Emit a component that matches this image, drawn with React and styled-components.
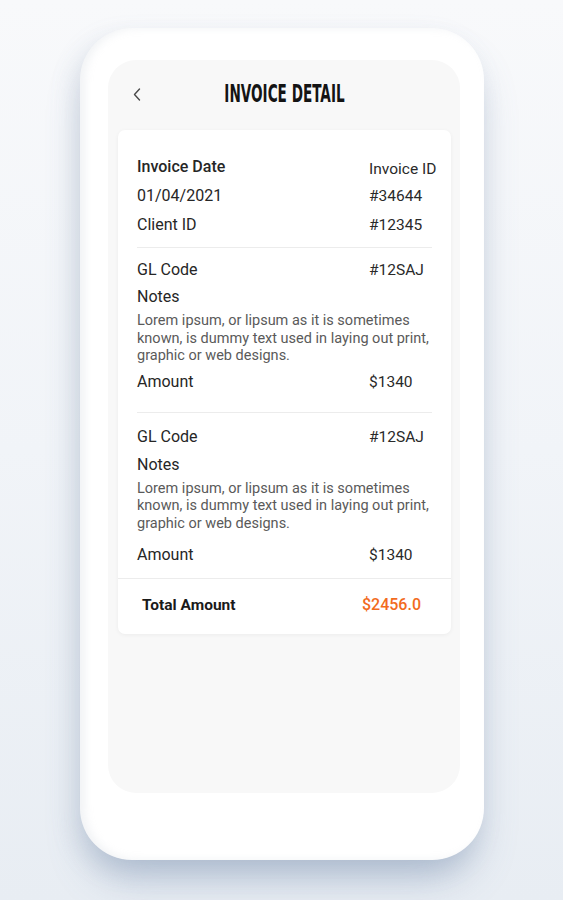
import React from "react";
import styled, { createGlobalStyle } from "styled-components";

const Global = createGlobalStyle`
  html, body { margin: 0; padding: 0; }
  body { font-family: Roboto, "Liberation Sans", sans-serif; }
  * { box-sizing: border-box; }
`;

const Page = styled.div`
  width: 563px;
  height: 900px;
  overflow: hidden;
  background: linear-gradient(180deg, #f8f9fb 0%, #f1f4f8 50%, #e8edf3 100%);
  display: flex;
  justify-content: center;
  padding-top: 28px;
`;

const Phone = styled.div`
  width: 404px;
  height: 832px;
  margin-left: 1px;
  background: #ffffff;
  border-radius: 52px;
  padding: 32px 24px 67px 28px;
  display: flex;
  box-shadow:
    0 26px 40px -10px rgba(110, 135, 170, 0.45),
    -6px 10px 24px rgba(140, 155, 175, 0.18),
    inset 5px 0 8px rgba(180, 190, 200, 0.18);
`;

const Screen = styled.div`
  flex: 1;
  background: #f8f8f8;
  border-radius: 28px;
  display: flex;
  flex-direction: column;
  padding: 0 9px 0 10px;
`;

const Header = styled.div`
  height: 70px;
  display: grid;
  grid-template-columns: 40px 1fr 40px;
  align-items: center;
  padding-bottom: 2px;
`;

const Back = styled.button`
  border: 0;
  background: none;
  padding: 0 0 0 15px;
  display: flex;
  align-items: center;
  color: #444;
  cursor: pointer;
`;

const TitleWrap = styled.div`
  display: flex;
  justify-content: center;
`;

const Title = styled.h1`
  margin: 0;
  display: inline-block;
  font-family: "Liberation Sans Narrow", "DejaVu Sans Condensed", "Liberation Sans", sans-serif;
  font-weight: 700;
  font-size: 24px;
  line-height: 24px;
  color: #141414;
  letter-spacing: 0;
  transform: scaleX(0.63);
  white-space: nowrap;
`;

const Card = styled.div`
  background: #ffffff;
  border-radius: 7px;
  box-shadow: 0 1px 4px rgba(0, 0, 0, 0.05);
  padding-top: 15px;
`;

const Body = styled.div`
  padding: 0 19px;
`;

const Section = styled.div`
  padding: ${(p) => p.$pt || 12}px 0 ${(p) => p.$pb || 12}px;
  border-bottom: ${(p) => (p.$noBorder ? "0" : "1px solid #ececec")};
  display: flex;
  flex-direction: column;
`;

const Row = styled.div`
  display: grid;
  grid-template-columns: 1fr 63px;
  align-items: center;
  line-height: 20px;
  margin-top: ${(p) => p.$mt || 0}px;
`;

const Label = styled.span`
  font-size: 16px;
  font-weight: ${(p) => (p.$strong ? 500 : 400)};
  color: #262626;
`;

const Value = styled.span`
  font-size: 15.5px;
  color: #2a2a2a;
  white-space: nowrap;
  transform: translateY(${(p) => p.$dy || 0}px);
`;

const Notes = styled.p`
  margin: 5px 0 0;
  font-size: 14.5px;
  line-height: 17.5px;
  color: #5a5a5a;
`;

const TotalRow = styled.div`
  border-top: 1px solid #ececec;
  display: flex;
  justify-content: space-between;
  align-items: center;
  padding: 16px 30px 19px 24px;
  line-height: 20px;
`;

const TotalLabel = styled.span`
  font-size: 15.5px;
  font-weight: 700;
  color: #1a1a1a;
`;

const TotalValue = styled.span`
  font-size: 16px;
  font-weight: 500;
  color: #f26b1d;
`;

const Chevron = () => (
  <svg width="8" height="13" viewBox="0 0 8 13" fill="none">
    <polyline points="6.5,1 1.5,6.5 6.5,12" stroke="#4a4a4a" strokeWidth="1.4" strokeLinecap="round" strokeLinejoin="round" />
  </svg>
);

const lorem =
  "Lorem ipsum, or lipsum as it is sometimes known, is dummy text used in laying out print, graphic or web designs.";

const Item = ({ pt, pb, notesGap, amountGap, noBorder }) => (
  <Section $pt={pt} $pb={pb} $noBorder={noBorder}>
    <Row>
      <Label>GL Code</Label>
      <Value>#12SAJ</Value>
    </Row>
    <Row $mt={notesGap}>
      <Label>Notes</Label>
    </Row>
    <Notes>{lorem}</Notes>
    <Row $mt={amountGap}>
      <Label>Amount</Label>
      <Value>$1340</Value>
    </Row>
  </Section>
);

export default function App() {
  return (
    <>
      <Global />
      <Page>
        <Phone>
          <Screen>
            <Header>
              <Back aria-label="Back">
                <Chevron />
              </Back>
              <TitleWrap>
                <Title>INVOICE DETAIL</Title>
              </TitleWrap>
              <span />
            </Header>
            <Card>
              <Body>
                <Section>
                  <Row>
                    <Label $strong>Invoice Date</Label>
                    <Value $dy={2}>Invoice ID</Value>
                  </Row>
                  <Row $mt={9}>
                    <Label>01/04/2021</Label>
                    <Value>#34644</Value>
                  </Row>
                  <Row $mt={9}>
                    <Label>Client ID</Label>
                    <Value>#12345</Value>
                  </Row>
                </Section>
                <Item pt={12} pb={20} notesGap={7} amountGap={7} />
                <Item pt={14} pb={13} notesGap={8} amountGap={13} noBorder />
              </Body>
              <TotalRow>
                <TotalLabel>Total Amount</TotalLabel>
                <TotalValue>$2456.0</TotalValue>
              </TotalRow>
            </Card>
          </Screen>
        </Phone>
      </Page>
    </>
  );
}
